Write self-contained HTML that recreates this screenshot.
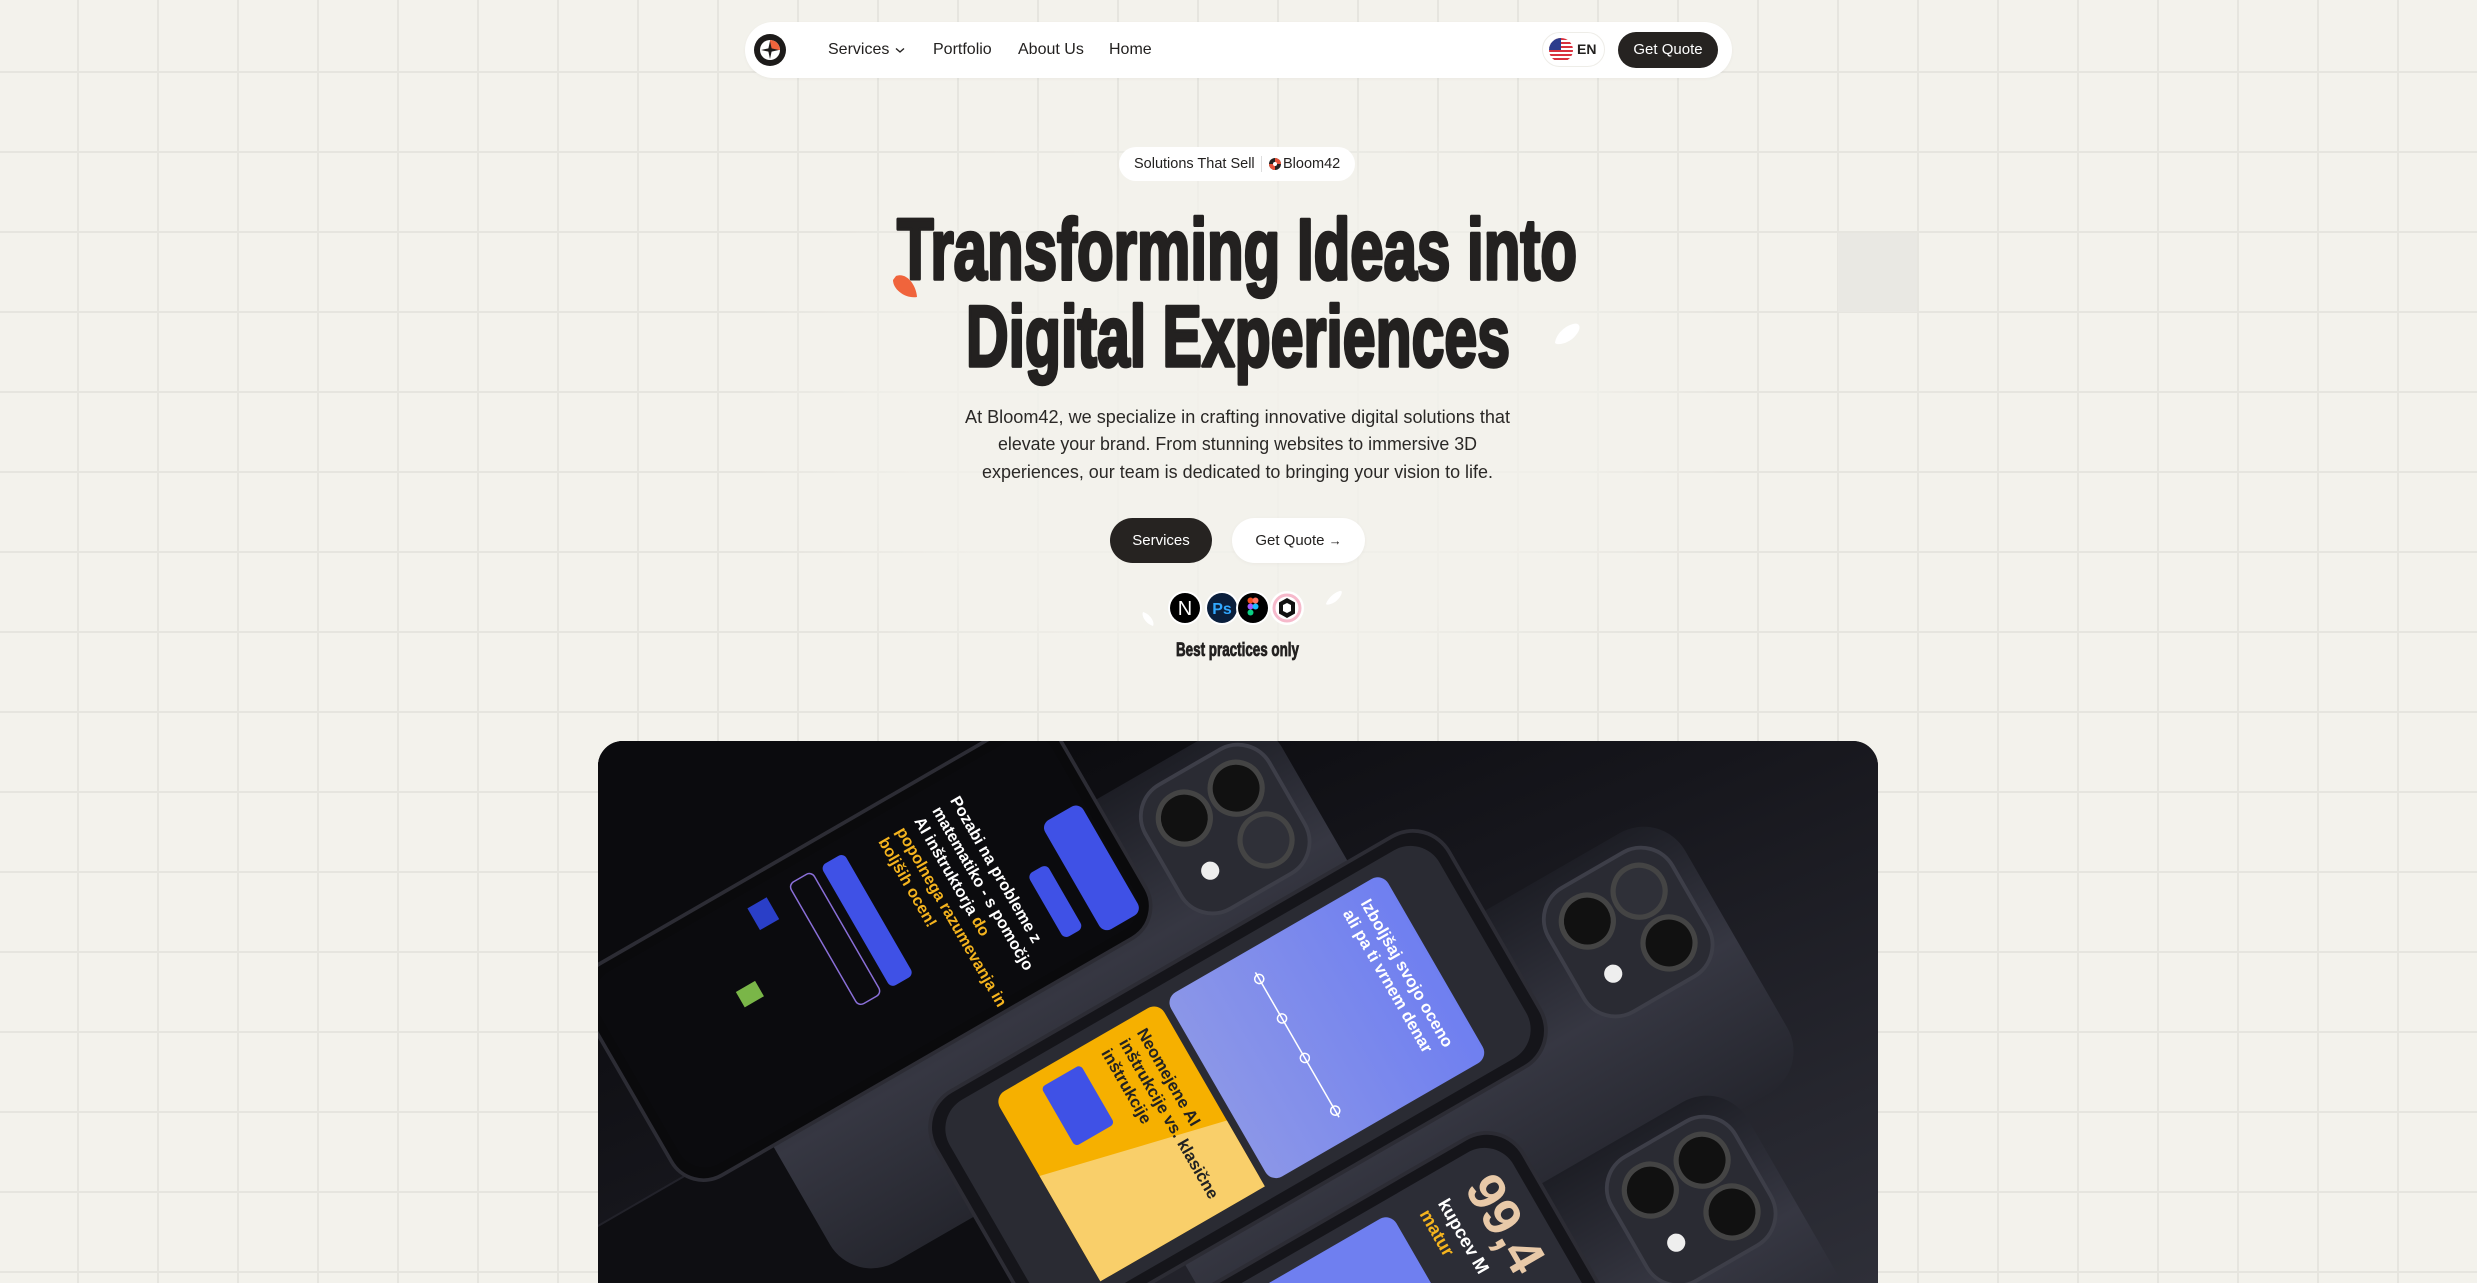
<!DOCTYPE html>
<html><head><meta charset="utf-8">
<style>
*{margin:0;padding:0;box-sizing:border-box}
html,body{width:2477px;height:1283px;overflow:hidden}
body{background-color:#f3f2ec;position:relative;font-family:"Liberation Sans",sans-serif;color:#232120;
background-image:linear-gradient(to right,#e6e5df 0,#e6e5df 2px,transparent 2px),linear-gradient(to bottom,#e6e5df 0,#e6e5df 2px,transparent 2px);
background-size:80px 80px;background-position:77px 0,0 71px}
.abs{position:absolute}
.fade{left:760px;top:110px;width:960px;height:620px;background:radial-gradient(ellipse at center,rgba(243,242,236,0.9) 0%,rgba(243,242,236,0.75) 50%,rgba(243,242,236,0) 75%)}
.nav{left:745px;top:22px;width:987px;height:56px;background:#fff;border-radius:28px;box-shadow:0 1px 3px rgba(0,0,0,0.04)}
.nav a{position:absolute;top:0;line-height:56px;font-size:16px;color:#232120;text-decoration:none}
.pill{left:1542px;top:32px;width:63px;height:35px;border-radius:18px;background:#fff;border:1px solid #eeede8}
.gq{left:1618px;top:32px;width:100px;height:36px;border-radius:18px;background:#262321;color:#fff;font-size:15px;line-height:36px;text-align:center}
.badge{left:1119px;top:147px;width:236px;height:34px;border-radius:17px;background:#fff;font-size:14.5px;line-height:34px}
.btn1{left:1110px;top:518px;width:102px;height:45px;border-radius:23px;background:#262321;color:#fff;font-size:15px;line-height:45px;text-align:center}
.btn2{left:1232px;top:518px;width:133px;height:45px;border-radius:23px;background:#fff;color:#232120;font-size:15px;line-height:45px;text-align:center;box-shadow:0 1px 4px rgba(0,0,0,0.04)}
.card{left:598px;top:741px;width:1280px;height:542px;border-radius:25px 25px 0 0;overflow:hidden;background:#121216}
</style></head><body>
<div class="abs" style="left:1838px;top:233px;width:79px;height:79px;background:#e9e8e3"></div>
<div class="abs fade"></div>

<div class="abs nav">
  <svg class="abs" style="left:9px;top:12px" width="32" height="32" viewBox="0 0 32 32">
    <circle cx="16" cy="16" r="16" fill="#1d1b1a"/>
    <circle cx="16" cy="16" r="10" fill="#fff"/>
    <path d="M16 6 A10 10 0 0 1 26 16 L16 16Z" fill="#f0643c"/>
    <path d="M16 7 L17.6 14.4 L25 16 L17.6 17.6 L16 25 L14.4 17.6 L7 16 L14.4 14.4Z" fill="#1d1b1a"/>
  </svg>
  <a style="left:83px">Services</a>
  <svg class="abs" style="left:150px;top:25px" width="10" height="7" viewBox="0 0 10 7"><path d="M1 1.5 L5 5 L9 1.5" stroke="#232120" stroke-width="1.4" fill="none"/></svg>
  <a style="left:188px">Portfolio</a>
  <a style="left:273px">About Us</a>
  <a style="left:364px">Home</a>
</div>
<div class="abs pill">
  <svg class="abs" style="left:6px;top:5px" width="24" height="24" viewBox="0 0 24 24">
    <defs><clipPath id="fc"><circle cx="12" cy="12" r="12"/></clipPath></defs>
    <g clip-path="url(#fc)">
      <rect width="24" height="24" fill="#fff"/>
      <rect y="0" width="24" height="2" fill="#d9313e"/><rect y="4" width="24" height="2" fill="#d9313e"/><rect y="8" width="24" height="2" fill="#d9313e"/><rect y="12" width="24" height="2" fill="#d9313e"/><rect y="16" width="24" height="2" fill="#d9313e"/><rect y="20" width="24" height="2" fill="#d9313e"/>
      <rect width="12" height="12" fill="#2c3c8c"/>
    </g>
  </svg>
  <span class="abs" style="left:34px;top:0;line-height:33px;font-size:14px;font-weight:bold">EN</span>
</div>
<div class="abs gq">Get Quote</div>

<div class="abs badge">
  <span class="abs" style="left:15px">Solutions That Sell</span>
  <div class="abs" style="left:142px;top:9px;width:1px;height:16px;background:#ddd"></div>
  <svg class="abs" style="left:150px;top:11px" width="12" height="12" viewBox="0 0 12 12">
    <circle cx="6" cy="6" r="6" fill="#262321"/><path d="M6 0 A6 6 0 0 1 12 6 L6 6Z" fill="#e5533a"/><path d="M6 12 A6 6 0 0 1 0 6 L6 6Z" fill="#e5533a"/><circle cx="6" cy="6" r="2" fill="#fff"/>
  </svg>
  <span class="abs" style="left:164px">Bloom42</span>
</div>

<svg class="abs" style="left:0;top:0" width="2477" height="700">
  <path d="M896 276 C906 272 916 284 917 297 C906 299 893 290 893 280Z" fill="#f0643c"/>
  <path d="M1573 324 C1580 322 1582 328 1576 335 C1570 343 1558 346 1555 343 C1556 334 1565 326 1573 324Z" fill="#fff"/>
  <path d="M1340 591 C1344 590 1341 598 1335 602 C1330 605 1326 605 1326 604 C1328 598 1335 592 1340 591Z" fill="#fff"/>
  <path d="M1143 612 C1141 616 1146 624 1153 626 C1155 622 1150 614 1143 612Z" fill="#fff"/>
  <g font-family="'Liberation Sans Narrow','Liberation Sans',sans-serif" font-weight="bold" fill="#232120" stroke="#232120" stroke-width="3.5" stroke-linejoin="round" font-size="86">
    <text x="897" y="279" textLength="680" lengthAdjust="spacingAndGlyphs">Transforming Ideas into</text>
    <text x="966" y="366" textLength="544" lengthAdjust="spacingAndGlyphs">Digital Experiences</text>
  </g>
  <g font-family="'Liberation Sans',sans-serif" fill="#2a2826" font-size="18">
    <text x="965" y="423" textLength="545" lengthAdjust="spacingAndGlyphs">At Bloom42, we specialize in crafting innovative digital solutions that</text>
    <text x="998" y="450" textLength="479" lengthAdjust="spacingAndGlyphs">elevate your brand. From stunning websites to immersive 3D</text>
    <text x="982" y="478" textLength="511" lengthAdjust="spacingAndGlyphs">experiences, our team is dedicated to bringing your vision to life.</text>
  </g>
  <text x="1176" y="656" textLength="123" lengthAdjust="spacingAndGlyphs" font-family="'Liberation Sans Narrow','Liberation Sans',sans-serif" font-weight="bold" font-size="19" stroke="#232120" stroke-width="0.8" fill="#232120">Best practices only</text>
</svg>

<div class="abs btn1">Services</div>
<div class="abs btn2">Get Quote <span style="font-size:13px">→</span></div>

<svg class="abs" style="left:1166px;top:588px" width="140" height="40" viewBox="0 0 140 40">
  <circle cx="19" cy="20" r="17" fill="#fff"/><circle cx="19" cy="20" r="15" fill="#000"/>
  <text x="19" y="27" text-anchor="middle" font-family="'Liberation Sans',sans-serif" font-size="20" fill="#fff">N</text>
  <circle cx="56" cy="20" r="17" fill="#fff"/><circle cx="56" cy="20" r="15" fill="#0a1f3c"/>
  <text x="56" y="26" text-anchor="middle" font-family="'Liberation Sans',sans-serif" font-weight="bold" font-size="16" fill="#31a8ff">Ps</text>
  <circle cx="87" cy="20" r="17" fill="#fff"/><circle cx="87" cy="20" r="15" fill="#000"/>
  <circle cx="84.5" cy="12.5" r="3" fill="#f24e1e"/><circle cx="89.5" cy="12.5" r="3" fill="#ff7262"/>
  <circle cx="84.5" cy="18.5" r="3" fill="#a259ff"/><circle cx="89.5" cy="18.5" r="3" fill="#1abcfe"/>
  <circle cx="84.5" cy="24.5" r="3" fill="#0acf83"/>
  <circle cx="121" cy="20" r="17" fill="#fff"/><circle cx="121" cy="20" r="13" fill="none" stroke="#f08aa8" stroke-width="3" opacity="0.6"/>
  <path d="M121 10 L129 14.5 L129 25.5 L121 30 L113 25.5 L113 14.5Z" fill="#111"/>
  <path d="M121 15 L125 17 L125 23 L121 25 L117 23 L117 17Z" fill="#fff"/>
</svg>

<div class="abs card">
<svg width="1280" height="542" viewBox="0 0 1280 542">
  <defs>
    <linearGradient id="bg" x1="0" y1="0" x2="1" y2="1">
      <stop offset="0" stop-color="#050507"/><stop offset="0.45" stop-color="#16161c"/><stop offset="1" stop-color="#2e2f38"/>
    </linearGradient>
    <linearGradient id="back" x1="0" y1="0" x2="1" y2="0">
      <stop offset="0" stop-color="#1d1e25"/><stop offset="0.5" stop-color="#363742"/><stop offset="1" stop-color="#25262e"/>
    </linearGradient>
    <linearGradient id="blue" x1="0" y1="0" x2="0" y2="1">
      <stop offset="0" stop-color="#6f7ff0"/><stop offset="1" stop-color="#8b96e8"/>
    </linearGradient>
  </defs>
  <rect width="1280" height="542" fill="url(#bg)"/>
  <g transform="translate(140,20) rotate(60)"><rect x="-140" y="-310" width="280" height="620" rx="45" fill="#0b0b0e" stroke="#2a2a30" stroke-width="2"/></g>
  <g transform="translate(150,560) rotate(60)"><rect x="-140" y="-310" width="280" height="620" rx="45" fill="#0e0e12" stroke="#22222a" stroke-width="2"/></g>
  <g transform="translate(458,255) rotate(60)">
    <rect x="-150" y="-320" width="300" height="640" rx="48" fill="url(#back)"/>
    <g transform="translate(-60,-230) scale(1.3)"><rect x="-55" y="-55" width="110" height="110" rx="28" fill="#2a2b33" stroke="#3d3e48" stroke-width="3"/>
    <circle cx="-23" cy="-23" r="20" fill="#111" stroke="#444" stroke-width="4"/><circle cx="23" cy="-23" r="20" fill="#2f3038" stroke="#444" stroke-width="4"/><circle cx="-23" cy="23" r="20" fill="#111" stroke="#444" stroke-width="4"/><circle cx="22" cy="26" r="7" fill="#eee"/></g>
  </g>
  <g transform="translate(861,358) rotate(60)">
    <rect x="-150" y="-320" width="300" height="640" rx="48" fill="url(#back)"/>
    <g transform="translate(-60,-230) scale(1.3)"><rect x="-55" y="-55" width="110" height="110" rx="28" fill="#2a2b33" stroke="#3d3e48" stroke-width="3"/>
    <circle cx="-23" cy="-23" r="20" fill="#2f3038" stroke="#444" stroke-width="4"/><circle cx="23" cy="-23" r="20" fill="#111" stroke="#444" stroke-width="4"/><circle cx="-23" cy="23" r="20" fill="#111" stroke="#444" stroke-width="4"/><circle cx="22" cy="26" r="7" fill="#eee"/></g>
  </g>
  <g transform="translate(924,627) rotate(60)">
    <rect x="-150" y="-320" width="300" height="640" rx="48" fill="url(#back)"/>
    <g transform="translate(-60,-230) scale(1.3)"><rect x="-55" y="-55" width="110" height="110" rx="28" fill="#2a2b33" stroke="#3d3e48" stroke-width="3"/>
    <circle cx="-23" cy="-23" r="20" fill="#111" stroke="#444" stroke-width="4"/><circle cx="23" cy="-23" r="20" fill="#111" stroke="#444" stroke-width="4"/><circle cx="-23" cy="23" r="20" fill="#111" stroke="#444" stroke-width="4"/><circle cx="22" cy="26" r="7" fill="#eee"/></g>
  </g>
  <!-- left phone -->
  <g transform="translate(268,210) rotate(60) scale(0.74)">
    <rect x="-165" y="-370" width="330" height="740" rx="50" fill="#0a0a0c" stroke="#2c2c34" stroke-width="5"/>
    <rect x="-150" y="-355" width="300" height="710" rx="40" fill="#0b0b0e"/>
    <rect x="-30" y="-350" width="170" height="60" rx="12" fill="#3f51e6"/>
    <rect x="20" y="-270" width="100" height="30" rx="8" fill="#3f51e6"/>
    <g font-family="'Liberation Sans',sans-serif" font-weight="bold" font-size="22" fill="#fff">
      <text x="-120" y="-200">Pozabi na probleme z</text>
      <text x="-120" y="-172">matematiko - s pomočjo</text>
      <text x="-120" y="-144">AI inštruktorja <tspan fill="#f5b41e">do</tspan></text>
      <text x="-120" y="-116" fill="#f5b41e">popolnega razumevanja in</text>
      <text x="-120" y="-88" fill="#f5b41e">boljših ocen!</text>
    </g>
    <rect x="-130" y="-40" width="190" height="36" rx="8" fill="#3f51e6"/>
    <rect x="-130" y="10" width="190" height="36" rx="8" fill="none" stroke="#8a6fd8" stroke-width="2"/>
    <rect x="-130" y="80" width="34" height="30" fill="#2a3fc8"/>
    <rect x="-40" y="150" width="24" height="30" fill="#7ab648"/>
  </g>
  <!-- center phone -->
  <g transform="translate(640,338) rotate(60) scale(0.76)">
    <rect x="-175" y="-390" width="350" height="780" rx="55" fill="#15151a" stroke="#2c2c34" stroke-width="5"/>
    <rect x="-158" y="-372" width="316" height="744" rx="44" fill="#2a2b33"/>
    <rect x="-140" y="-300" width="280" height="330" rx="16" fill="url(#blue)"/>
    <rect x="-140" y="40" width="280" height="250" rx="16" fill="#f6b000"/>
    <path d="M40 40 L140 40 L140 290 L-20 290Z" fill="#f9cf6a"/>
    <rect x="-120" y="170" width="90" height="60" rx="6" fill="#3f51e6"/>
    <g font-family="'Liberation Sans',sans-serif" font-weight="bold" font-size="22" fill="#fff">
      <text x="-120" y="-255">Izboljšaj svojo oceno</text>
      <text x="-120" y="-228">ali pa ti vrnem denar</text>
    </g>
    <g font-family="'Liberation Sans',sans-serif" font-weight="bold" font-size="22" fill="#222">
      <text x="-120" y="85">Neomejene AI</text>
      <text x="-120" y="112">inštrukcije vs. klasične</text>
      <text x="-120" y="139">inštrukcije</text>
    </g>
    <path d="M-110 -90 L110 -90" stroke="#fff" stroke-width="2"/>
    <circle cx="-100" cy="-90" r="6" fill="none" stroke="#fff" stroke-width="2"/><circle cx="-40" cy="-90" r="6" fill="none" stroke="#fff" stroke-width="2"/><circle cx="20" cy="-90" r="6" fill="none" stroke="#fff" stroke-width="2"/><circle cx="100" cy="-90" r="6" fill="none" stroke="#fff" stroke-width="2"/>
  </g>
  <!-- bottom phone -->
  <g transform="translate(714,640) rotate(60) scale(0.76)">
    <rect x="-175" y="-390" width="350" height="780" rx="55" fill="#15151a" stroke="#2c2c34" stroke-width="5"/>
    <rect x="-158" y="-372" width="316" height="744" rx="44" fill="#2c2d36"/>
    <text x="-120" y="-300" font-family="'Liberation Sans',sans-serif" font-weight="bold" font-size="70" fill="#e8c9a8">99,4</text>
    <text x="-120" y="-260" font-family="'Liberation Sans',sans-serif" font-weight="bold" font-size="24" fill="#fff">kupcev M</text>
    <text x="-120" y="-232" font-family="'Liberation Sans',sans-serif" font-weight="bold" font-size="24" fill="#f5b41e">matur</text>
    <rect x="-140" y="-200" width="280" height="200" rx="16" fill="#6f7ff0"/>
  </g>
</svg>
</div>
</body></html>
